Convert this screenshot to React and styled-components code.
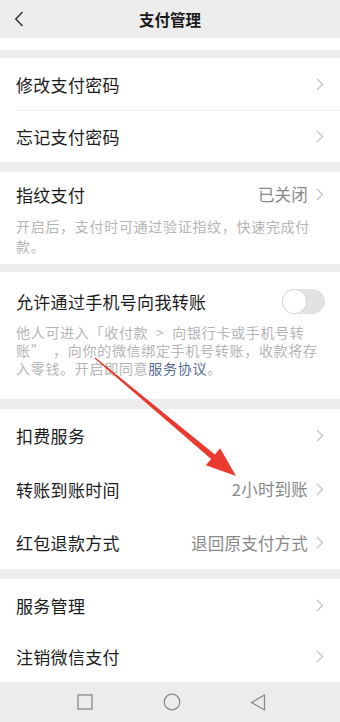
import React, { useState } from "react";
import styled, { createGlobalStyle } from "styled-components";

const GlobalStyle = createGlobalStyle`
  html, body {
    margin: 0;
    padding: 0;
    background: #ededed;
  }
  body {
    font-family: "Noto Sans CJK SC", "Noto Sans", sans-serif;
    -webkit-font-smoothing: antialiased;
  }
`;

const Page = styled.div`
  position: relative;
  width: 340px;
  height: 722px;
  overflow: hidden;
  background: #ededed;
  display: flex;
  flex-direction: column;
`;

const Header = styled.div`
  height: 38px;
  flex-shrink: 0;
  display: flex;
  align-items: center;
  justify-content: center;
  position: relative;
  background: #ededed;
`;

const BackBtn = styled.div`
  position: absolute;
  left: 12px;
  top: 10px;
  width: 14px;
  height: 18px;
  display: flex;
  align-items: center;
  justify-content: center;
`;

const Title = styled.h1`
  margin: 0;
  font-size: 15.5px;
  font-weight: 700;
  color: #1a1a1a;
`;

const Strip = styled.div`
  height: 12px;
  flex-shrink: 0;
  background: #fff;
`;

const Gap = styled.div`
  height: ${(p) => p.$h}px;
  flex-shrink: 0;
`;

const Group = styled.div`
  background: #fff;
  flex-shrink: 0;
`;

const Row = styled.div`
  height: ${(p) => p.$h || 52}px;
  display: flex;
  align-items: center;
  padding: 0 16px;
  position: relative;

  & + &::before {
    content: "";
    position: absolute;
    top: 0;
    left: 16px;
    right: 0;
    border-top: 1px solid #efefef;
  }
`;

const Label = styled.span`
  flex: 1;
  font-size: 17px;
  color: #1b1b1b;
  letter-spacing: 0.3px;
`;

const Value = styled.span`
  font-size: 16.5px;
  color: #888;
  margin-right: 8px;
  letter-spacing: 0.2px;
`;

const Block = styled.div`
  padding: ${(p) => p.$pad};
`;

const BlockHead = styled.div`
  height: 24px;
  display: flex;
  align-items: center;
`;

const Desc = styled.p`
  margin: ${(p) => p.$mt}px 0 0;
  font-size: 14px;
  line-height: ${(p) => p.$lh}px;
  letter-spacing: 0.7px;
  color: #b5b5b5;
  white-space: nowrap;
`;

const LinkText = styled.span`
  color: #576b95;
`;

const Track = styled.div`
  width: 43px;
  height: 25px;
  border-radius: 13px;
  background: ${(p) => (p.$on ? "#07c160" : "#e2e2e2")};
  position: relative;
  flex-shrink: 0;
  margin-right: -1px;
`;

const Knob = styled.div`
  position: absolute;
  top: 1px;
  left: ${(p) => (p.$on ? "19px" : "1px")};
  width: 23px;
  height: 23px;
  border-radius: 50%;
  background: #fff;
  box-shadow: 0 0 0 1px #d6d6d6;
`;

const Spacer = styled.div`
  flex: 1;
`;

const NavBar = styled.div`
  flex: 1;
  display: flex;
  align-items: center;
  justify-content: space-between;
  padding: 0 74px 0 77px;
  background: #ececec;
`;

const Overlay = styled.svg`
  position: absolute;
  left: 0;
  top: 0;
  pointer-events: none;
`;

const Chevron = () => (
  <svg width="8" height="13" viewBox="0 0 8 13">
    <path d="M1 1 L6.5 6.5 L1 12" fill="none" stroke="#c4c4c4" strokeWidth="1.3" />
  </svg>
);

const ListRow = ({ label, value, h }) => (
  <Row $h={h}>
    <Label>{label}</Label>
    {value && <Value>{value}</Value>}
    <Chevron />
  </Row>
);

const Toggle = () => {
  const [on, setOn] = useState(false);
  return (
    <Track $on={on} onClick={() => setOn(!on)}>
      <Knob $on={on} />
    </Track>
  );
};

// red annotation arrow
const tip = [236, 476];
const start = [95, 358];
const dx = tip[0] - start[0];
const dy = tip[1] - start[1];
const len = Math.sqrt(dx * dx + dy * dy);
const ux = dx / len;
const uy = dy / len;
const px = -uy;
const py = ux;
const headLen = 30;
const headW = 11;
const bx = tip[0] - ux * headLen;
const by = tip[1] - uy * headLen;
const pts = [
  [start[0] + px * 0.7, start[1] + py * 0.7],
  [bx + px * 3, by + py * 3],
  [bx + px * headW, by + py * headW],
  tip,
  [bx - px * headW, by - py * headW],
  [bx - px * 3, by - py * 3],
  [start[0] - px * 0.7, start[1] - py * 0.7],
]
  .map((p) => p.map((v) => v.toFixed(1)).join(","))
  .join(" ");

export default function App() {
  return (
    <>
      <GlobalStyle />
      <Page>
        <Header>
          <BackBtn>
            <svg width="10" height="16" viewBox="0 0 10 16">
              <path d="M8.5 1 L1.8 8 L8.5 15" fill="none" stroke="#333" strokeWidth="1.5" />
            </svg>
          </BackBtn>
          <Title>支付管理</Title>
        </Header>
        <Strip />
        <Gap $h={8} />
        <Group>
          <ListRow label="修改支付密码" />
          <ListRow label="忘记支付密码" />
        </Group>
        <Gap $h={10} />
        <Group>
          <Block $pad="10px 16px 8px">
            <BlockHead>
              <Label>指纹支付</Label>
              <Value>已关闭</Value>
              <Chevron />
            </BlockHead>
            <Desc $mt={10} $lh={20}>
              开启后，支付时可通过验证指纹，快速完成付
              <br />
              款。
            </Desc>
          </Block>
        </Group>
        <Gap $h={8} />
        <Group>
          <Block $pad="17px 16px 22px">
            <BlockHead>
              <Label>允许通过手机号向我转账</Label>
              <Toggle />
            </BlockHead>
            <Desc $mt={10} $lh={18}>
              他人可进入「收付款{"\u2002"}&gt;{"\u2002"}向银行卡或手机号转
              <br />
              账”{"\u2002"}，向你的微信绑定手机号转账，收款将存
              <br />
              入零钱。开启即同意<LinkText>服务协议</LinkText>。
            </Desc>
          </Block>
        </Group>
        <Gap $h={10} />
        <Group>
          <ListRow label="扣费服务" h={53} />
          <ListRow label="转账到账时间" value="2小时到账" h={54} />
          <ListRow label="红包退款方式" value="退回原支付方式" h={53} />
        </Group>
        <Gap $h={10} />
        <Group>
          <ListRow label="服务管理" />
          <ListRow label="注销微信支付" h={51} />
        </Group>
        <NavBar>
          <svg width="16" height="16" viewBox="0 0 16 16">
            <rect x="1" y="1" width="14" height="14" fill="none" stroke="#8a8a8a" strokeWidth="1.3" />
          </svg>
          <Spacer />
          <svg width="18" height="18" viewBox="0 0 18 18">
            <circle cx="9" cy="9" r="7.8" fill="none" stroke="#8a8a8a" strokeWidth="1.3" />
          </svg>
          <Spacer />
          <svg width="16" height="17" viewBox="0 0 16 17">
            <path d="M14.5 1 L1.5 8.5 L14.5 16 Z" fill="none" stroke="#8a8a8a" strokeWidth="1.3" strokeLinejoin="round" />
          </svg>
        </NavBar>
        <Overlay width="340" height="722" viewBox="0 0 340 722">
          <polygon points={pts} fill="#ea3a2f" />
        </Overlay>
      </Page>
    </>
  );
}
